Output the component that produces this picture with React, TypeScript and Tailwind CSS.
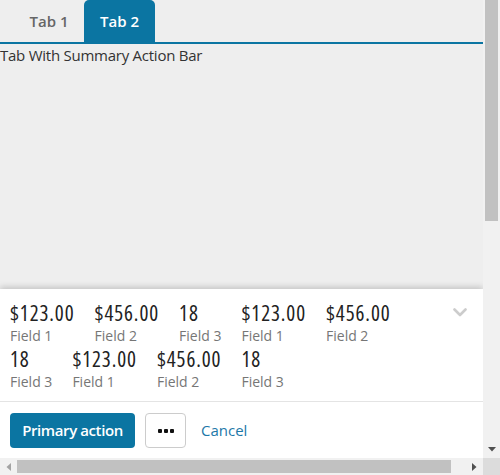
import React from "react";

const items = [
  { v: "$123.00", l: "Field 1" },
  { v: "$456.00", l: "Field 2" },
  { v: "18", l: "Field 3" },
  { v: "$123.00", l: "Field 1" },
  { v: "$456.00", l: "Field 2" },
  { v: "18", l: "Field 3" },
  { v: "$123.00", l: "Field 1" },
  { v: "$456.00", l: "Field 2" },
  { v: "18", l: "Field 3" },
];

function SummaryItem({ v, l }: { v: string; l: string }) {
  return (
    <div className="flex flex-col">
      <div className="text-[21px] leading-[24px] font-medium text-[#222222] [font-stretch:75%] tracking-[0.9px]">{v}</div>
      <div className="text-[14px] leading-[22px] text-[#767676]">{l}</div>
    </div>
  );
}

export default function App() {
  return (
    <div className="w-[500px] h-[475px] flex flex-col overflow-hidden bg-[#eeeeee] font-['Open_Sans','Noto_Sans',sans-serif]">
      <div className="flex flex-1 min-h-0">
        <div className="flex-1 flex flex-col min-w-0">
          <div className="flex pl-[14px] h-[44px] border-b-2 border-[#0b75a2]">
            <div className="w-[70px] flex items-center justify-center text-[15px] font-semibold text-[#666666]">Tab 1</div>
            <div className="w-[71px] flex items-center justify-center text-[15px] font-semibold text-white bg-[#0b75a2] rounded-t-[5px]">Tab 2</div>
          </div>
          <div className="text-[15px] leading-[20px] text-[#333333] pt-[1px] tracking-[-0.25px]">Tab With Summary Action Bar</div>
          <div className="flex-1" />
          <div className="bg-white shadow-[0_-2px_6px_rgba(0,0,0,0.18)]">
            <div className="flex items-start pl-[10px] pr-[16px] pt-[12px] pb-[8px]">
              <div className="flex-1 flex flex-wrap gap-x-[20px] max-w-[430px]">
                {items.map((it, i) => (
                  <SummaryItem key={i} v={it.v} l={it.l} />
                ))}
              </div>
              <div className="ml-auto pt-[7px]">
                <svg width="14" height="9" viewBox="0 0 14 9">
                  <path d="M1.5 1.5 L7 7 L12.5 1.5" fill="none" stroke="#cccccc" strokeWidth="2.6" strokeLinecap="round" strokeLinejoin="round" />
                </svg>
              </div>
            </div>
            <div className="border-t border-[#e4e4e4] flex items-center gap-[10px] pl-[10px] pt-[11px] pb-[10px]">
              <button className="h-[35px] w-[125px] rounded-[4px] bg-[#0b75a2] text-white text-[15px] font-semibold tracking-[-0.4px]">Primary action</button>
              <button className="h-[35px] w-[41px] rounded-[4px] border border-[#cccccc] bg-white flex items-center justify-center gap-[2px]">
                <span className="w-[4px] h-[4px] bg-[#111111] rounded-[1px]" />
                <span className="w-[4px] h-[4px] bg-[#111111] rounded-[1px]" />
                <span className="w-[4px] h-[4px] bg-[#111111] rounded-[1px]" />
              </button>
              <span className="ml-[5px] text-[15px] text-[#1d78a8]">Cancel</span>
            </div>
          </div>
        </div>
        <div className="w-[17px] bg-[#f1f1f1] flex flex-col items-center">
          <div className="w-[13px] h-[221px] bg-[#c1c1c1]" />
          <div className="flex-1" />
          <div className="h-[17px] flex items-center justify-center">
            <svg width="8" height="5" viewBox="0 0 8 5"><path d="M0 0 H8 L4 4.5 Z" fill="#505050" /></svg>
          </div>
        </div>
      </div>
      <div className="h-[17px] flex">
        <div className="flex-1 bg-[#f1f1f1] flex items-center">
          <div className="w-[17px] flex items-center justify-center">
            <svg width="5" height="8" viewBox="0 0 5 8"><path d="M5 0 V8 L0.5 4 Z" fill="#a3a3a3" /></svg>
          </div>
          <div className="w-[434px] h-[13px] bg-[#c1c1c1]" />
          <div className="flex-1 flex items-center justify-end pr-[6px]">
            <svg width="5" height="8" viewBox="0 0 5 8"><path d="M0 0 V8 L4.5 4 Z" fill="#505050" /></svg>
          </div>
        </div>
        <div className="w-[17px] bg-[#dcdcdc]" />
      </div>
    </div>
  );
}
